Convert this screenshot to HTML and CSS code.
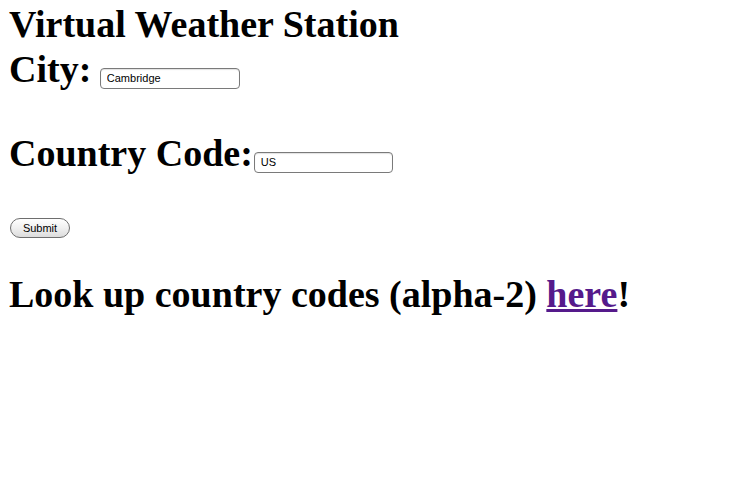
FILE: index.html
```html
<!DOCTYPE html>
<html>
<head>
<meta charset="utf-8">
<title>Virtual Weather Station</title>
<link rel="stylesheet" href="styles.css">
</head>
<body>
<h1 class="title">Virtual Weather Station</h1>
<form class="form">
  <div class="row row-city"><span class="label">City: </span><input class="field field-city" type="text" value="Cambridge"></div>
  <div class="row row-country"><span class="label">Country Code:</span><input class="field field-country" type="text" value="US"></div>
  <div class="submit-row"><button class="submit" type="button">Submit</button></div>
</form>
<h1 class="lookup">Look up country codes (alpha-2) <a class="link" href="#">here</a>!</h1>
</body>
</html>
```
FILE: styles.css
```css
html, body {
  background: #fff;
}
body {
  margin: 0 8px;
  font-family: "Liberation Serif", "Times New Roman", serif;
  color: #000;
}
.title {
  margin: 0;
  padding-top: 2px;
  padding-left: 1px;
  font-size: 38px;
  line-height: 45px;
  font-weight: bold;
}
.form {
  margin: 0;
}
.row {
  padding-left: 1px;
  font-size: 38px;
  line-height: 45px;
  font-weight: bold;
  white-space: nowrap;
}
.row-country {
  margin-top: 39px;
}
.field {
  box-sizing: border-box;
  height: 21px;
  padding: 3px 6px;
  border: 1px solid #7a7a7a;
  border-radius: 4px;
  font-family: "Liberation Sans", Arial, sans-serif;
  font-size: 11px;
  font-weight: normal;
  color: #000;
  background: #fff;
  box-shadow: inset 0 1px 1px rgba(0,0,0,0.12);
  vertical-align: baseline;
  outline: none;
}
.field-city {
  width: 140px;
  margin-left: -1px;
}
.field-country {
  width: 139px;
  margin-left: 1px;
}
.submit-row {
  margin-top: 42px;
  padding-left: 2px;
  height: 20px;
}
.submit {
  box-sizing: border-box;
  width: 60px;
  height: 20px;
  padding: 0;
  border: 1px solid #6e6e6e;
  border-radius: 10px;
  background: linear-gradient(#ffffff, #f0f0f0 50%, #dcdcdc);
  font-family: "Liberation Sans", Arial, sans-serif;
  font-size: 11px;
  color: #000;
  display: block;
}
.lookup {
  margin: 34px 0 0;
  padding-left: 1px;
  font-size: 38px;
  line-height: 45px;
  font-weight: bold;
}
.link {
  color: #551a8b;
  text-decoration: underline;
}
```
